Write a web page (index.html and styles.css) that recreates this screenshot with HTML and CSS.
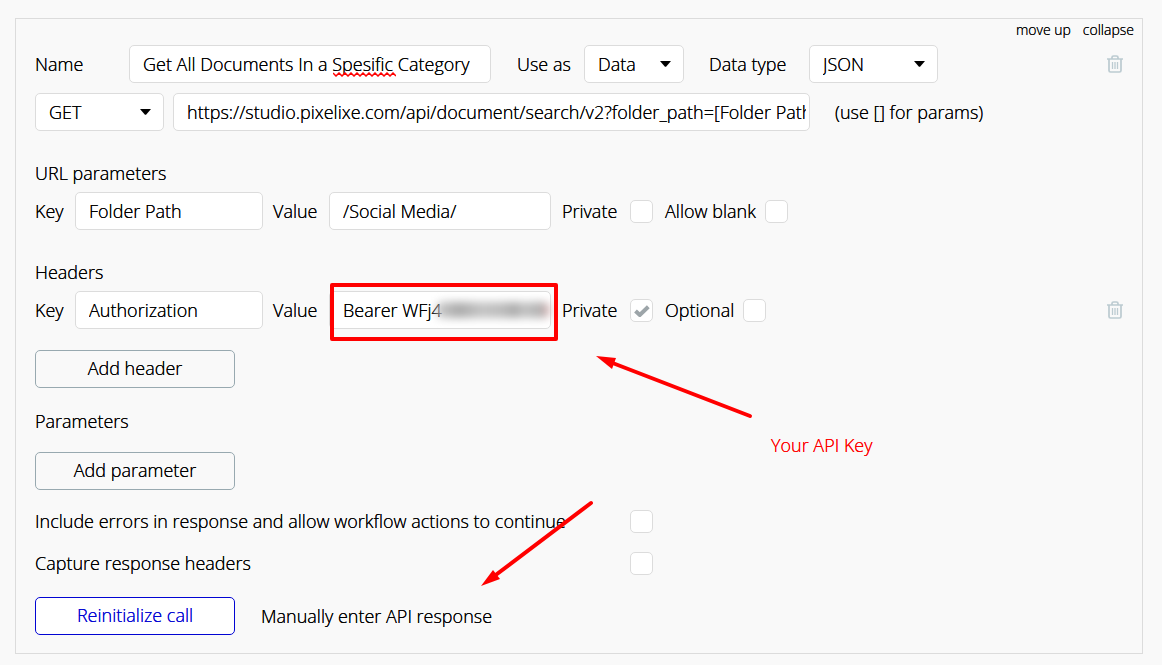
FILE: index.html
```html
<!DOCTYPE html>
<html lang="en">
<head>
<meta charset="utf-8">
<title>API call settings</title>
<link rel="stylesheet" href="styles.css">
</head>
<body>
<svg class="defs" aria-hidden="true">
  <symbol id="trash" viewBox="0 0 16 18">
    <path d="M0 4h16M5 4V2.500Q5 1 6.500 1h3Q11 1 11 2.500V4M2 4v11.500Q2 17 3.500 17h9Q14 17 14 15.500V4" fill="none" stroke="currentColor" stroke-width="1.700"/>
    <path d="M5.500 7v7M8 7v7M10.500 7v7" fill="none" stroke="currentColor" stroke-width="1.300"/>
  </symbol>
  <symbol id="caret" viewBox="0 0 11 6"><path d="M0 0h11L6.500 5.200Q5.500 6.200 4.500 5.200z"/></symbol>
</svg>
<main class="call">
  <nav class="call-nav">
    <a href="#up">move up</a>
    <a href="#collapse">collapse</a>
  </nav>

  <div class="row">
    <label class="label-name" for="name">Name</label>
    <span class="field field-name">
      <input class="box" id="name" type="text" value="Get All Documents In a Spesific Category">
      <svg class="squiggle" width="63" height="5" viewBox="0 0 63 5" aria-hidden="true"><path d="M0 1l3 3 3-3 3 3 3-3 3 3 3-3 3 3 3-3 3 3 3-3 3 3 3-3 3 3 3-3 3 3 3-3 3 3 3-3 3 3 3-3 3 3"/></svg>
    </span>
    <label class="label-use" for="use">Use as</label>
    <span class="field field-use"><select class="box" id="use"><option>Data</option></select><svg class="caret"><use href="#caret"/></svg></span>
    <label class="label-type" for="type">Data type</label>
    <span class="field field-select"><select class="box" id="type"><option>JSON</option></select><svg class="caret"><use href="#caret"/></svg></span>
    <button class="trash" type="button" aria-label="Delete call"><svg><use href="#trash"/></svg></button>
  </div>

  <div class="row row-url">
    <span class="field field-select"><select class="box" aria-label="Method"><option>GET</option></select><svg class="caret"><use href="#caret"/></svg></span>
    <span class="field field-url"><input class="box" type="text" aria-label="URL" value="https://studio.pixelixe.com/api/document/search/v2?folder_path=[Folder Path]"></span>
    <span class="hint">(use [] for params)</span>
  </div>

  <h2 class="title">URL parameters</h2>
  <div class="row">
    <label class="label-key" for="pkey">Key</label>
    <span class="field field-key"><input class="box" id="pkey" type="text" value="Folder Path"></span>
    <label class="label-value" for="pvalue">Value</label>
    <span class="field field-value"><input class="box" id="pvalue" type="text" value="/Social Media/"></span>
    <label class="label-private" for="pprivate">Private</label>
    <input class="check" id="pprivate" type="checkbox">
    <label class="label-option" for="pblank">Allow blank</label>
    <input class="check" id="pblank" type="checkbox">
  </div>

  <h2 class="title">Headers</h2>
  <div class="row">
    <label class="label-key" for="hkey">Key</label>
    <span class="field field-key"><input class="box" id="hkey" type="text" value="Authorization"></span>
    <label class="label-value" for="hvalue">Value</label>
    <span class="field field-value marked"><input class="box" id="hvalue" type="text" value="Bearer WFj4"><span class="redacted" aria-hidden="true"></span></span>
    <label class="label-private" for="hprivate">Private</label>
    <span class="tick"><input class="check" id="hprivate" type="checkbox" checked><svg viewBox="0 0 16 12" aria-hidden="true"><path d="M1.500 6l4.300 4L14.300 1.800"/></svg></span>
    <label class="label-option" for="hoptional">Optional</label>
    <input class="check" id="hoptional" type="checkbox">
    <button class="trash" type="button" aria-label="Delete header"><svg><use href="#trash"/></svg></button>
  </div>
  <button class="button add-header" type="button">Add header</button>

  <h2 class="title title-params">Parameters</h2>
  <button class="button add-param" type="button">Add parameter</button>

  <div class="option"><label for="errors">Include errors in response and allow workflow actions to continue</label><input class="check" id="errors" type="checkbox"></div>
  <div class="option"><label for="capture">Capture response headers</label><input class="check" id="capture" type="checkbox"></div>

  <div class="row actions">
    <button class="button primary" type="button">Reinitialize call</button>
    <a href="#manual">Manually enter API response</a>
  </div>

  <svg class="arrow arrow-key" width="156" height="64" viewBox="0 0 156 64" aria-hidden="true"><path class="shaft" d="M14 6L154 60"/><path class="head" d="M0 0l20 2-4 11z"/></svg>
  <svg class="arrow arrow-manual" width="114" height="88" viewBox="0 0 114 88" aria-hidden="true"><path class="shaft" d="M110 3L12 77"/><path class="head" d="M0 86L12 70l7 9z"/></svg>
  <span class="note">Your API Key</span>
</main>
</body>
</html>
```
FILE: styles.css
```css
* { box-sizing: border-box; }
body { margin: 0; padding: 18px 19px 11px 15px; background: #f9f9f9; color: #000; font: 300 18px/24px "Open Sans", sans-serif; text-shadow: 0 0 0 currentColor; }
a { color: inherit; text-decoration: none; }
input, select, button { margin: 0; font: inherit; color: inherit; text-shadow: inherit; }
.defs { position: absolute; width: 0; height: 0; }

.call { position: relative; padding: 0 19px 18px; border: 1px solid #dcdcdc; }
.call-nav { display: flex; justify-content: flex-end; gap: 12px; height: 26px; margin-right: -11px; font-size: 14px; line-height: 22px; }

.row { display: flex; align-items: center; white-space: nowrap; }
.row-url { margin-top: 10px; }
.title { margin: 30px 0 7px; font: inherit; }
.field { position: relative; flex: 0 1 auto; min-width: 0; }
.box { display: block; width: 100%; height: 38px; padding: 0 13px; border: 1px solid #dcdcdc; border-radius: 5px; background: #fff; appearance: none; }
.field-name { width: 362px; }
.field-use { width: 100px; }
.field-select { width: 129px; }
.field-url { width: 637px; margin-left: 9px; }
.field-url .box { padding-right: 3px; }
.field-key { width: 188px; }
.field-value { width: 222px; }
.label-name { width: 94px; }
.label-use { width: 93px; padding-left: 26px; }
.label-type { width: 125px; padding-left: 25px; }
.label-key { width: 40px; }
.label-value { width: 66px; padding-left: 10px; }
.label-private { width: 79px; padding-left: 11px; }
.label-option { padding: 0 9px 0 12px; }
.hint { padding-left: 25px; }

.caret { position: absolute; right: 13px; top: 16px; width: 11px; height: 6px; pointer-events: none; }
.squiggle { position: absolute; left: 204px; top: 27px; fill: none; stroke: #f00; stroke-width: 1.5; }

.check { display: block; flex: none; width: 23px; height: 23px; border: 1px solid #dcdcdc; border-radius: 5px; background: #fff; appearance: none; }
.tick { position: relative; }
.tick svg { position: absolute; left: 4px; top: 6px; width: 16px; height: 12px; fill: none; stroke: #9da5a9; stroke-width: 4; pointer-events: none; }

.trash { margin-left: auto; padding: 0; border: 0; background: none; color: #bccbd1; }
.trash svg { display: block; width: 16px; height: 18px; }

.button { display: block; width: 200px; height: 38px; padding: 0 0 2px; border: 1px solid #98a9b0; border-radius: 5px; background: none; }
.add-header { margin-top: 21px; }
.title-params { margin: 21px 0 19px; }
.add-param { margin-bottom: 19px; }
.option { display: flex; align-items: center; justify-content: space-between; width: 618px; max-width: 100%; margin-bottom: 18px; }
.actions { gap: 26px; margin-top: 22px; }
.primary { border-color: #0205d3; background: #fff; color: #0205d3; }

.marked::after { content: ""; position: absolute; inset: -8px -7px -12px 1px; border: 4px solid #f00; border-radius: 2px; pointer-events: none; }
.redacted { position: absolute; left: 107px; top: 11px; width: 114px; height: 16px; border-radius: 6px; background: linear-gradient(90deg, #ccc, #aaa 20%, #c4c4c4 40%, #bbb 60%, #aaa 68%, #c4c4c4 78%, #b0b0b0 92%, #e5b5b5); filter: blur(4px); }
.arrow { position: absolute; overflow: visible; pointer-events: none; }
.arrow-key { left: 580px; top: 337px; }
.arrow-manual { left: 465px; top: 481px; }
.shaft { fill: none; stroke: #f00; stroke-width: 4; stroke-linecap: round; }
.head { fill: #f00; }
.note { position: absolute; left: 755px; top: 414px; color: #f00; }
```
